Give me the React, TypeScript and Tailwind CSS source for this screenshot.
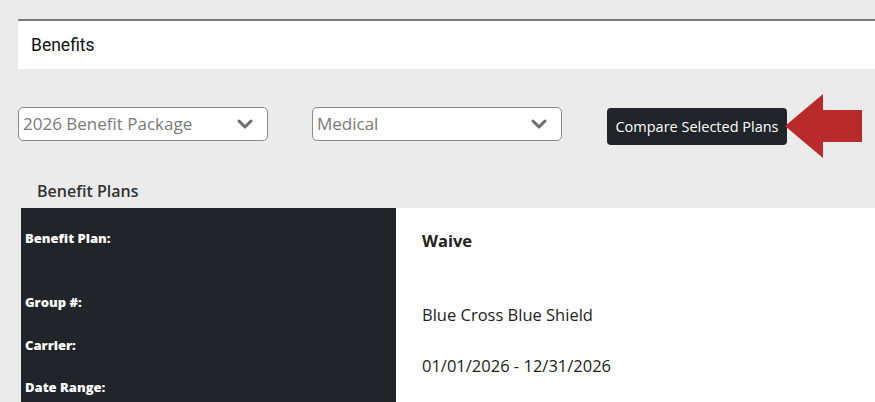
import { ChevronDown } from 'lucide-react';

function Select({ label }: { label: string }) {
    return (
        <div className="flex h-[34px] w-[250px] items-center justify-between rounded-[5px] border border-[#8c8c8c] bg-white pl-1 pr-[10px]">
            <span className="text-[17px] text-[#7a7a7a]">{label}</span>
            <ChevronDown className="h-6 w-6 text-[#6b6b6b]" strokeWidth={3} />
        </div>
    );
}

export default function App() {
    return (
        <div className="h-[402px] w-[875px] overflow-hidden bg-[#ebebeb] font-['Open_Sans',sans-serif]">
            <div className="pt-[19px] pl-[18px]">
                <div className="h-[50px] border-t-2 border-[#7a7a7a] bg-white pl-[13px] pt-[11px] font-['Roboto',sans-serif] text-[17.5px] text-[#111]">
                    Benefits
                </div>
            </div>

            <div className="mt-[25px] flex items-start pl-[18px]">
                <div className="mt-[13px]">
                    <Select label="2026 Benefit Package" />
                </div>
                <div className="ml-[44px] mt-[13px]">
                    <Select label="Medical" />
                </div>
                <button className="ml-[45px] mt-[14px] flex h-[37px] w-[180px] items-center justify-center rounded-[4px] bg-[#212529] text-[14.5px] font-medium text-white">
                    Compare Selected Plans
                </button>
                <svg className="-ml-[2px]" width="80" height="64" viewBox="0 0 80 64">
                    <polygon points="0,32 38,0 38,16 77,16 77,48 38,48 38,64" fill="#b92b2b" />
                </svg>
            </div>

            <div className="mt-[21px] pl-[37px] text-[16px] font-semibold text-[#333]">Benefit Plans</div>

            <div className="mt-[5px] ml-[21px] flex h-[200px]">
                <div className="w-[375px] bg-[#212529] pl-[4px] pt-[21px] text-[13px] font-extrabold text-white">
                    <div>Benefit Plan:</div>
                    <div className="mt-[44px]">Group #:</div>
                    <div className="mt-[24px]">Carrier:</div>
                    <div className="mt-[22px]">Date Range:</div>
                </div>
                <div className="flex-1 bg-white pl-[26px] pt-[21px] text-[16.5px] text-[#222]">
                    <div className="font-bold">Waive</div>
                    <div className="mt-[49px]">Blue Cross Blue Shield</div>
                    <div className="mt-[26px]">01/01/2026 - 12/31/2026</div>
                </div>
            </div>
        </div>
    );
}
